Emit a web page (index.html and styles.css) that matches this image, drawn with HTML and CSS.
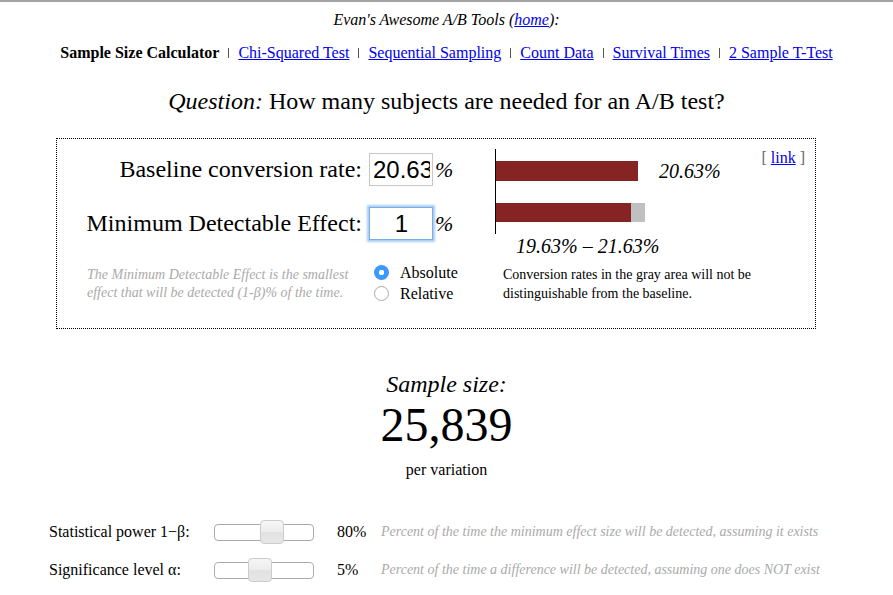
FILE: index.html
```html
<!DOCTYPE html>
<html>
<head>
<meta charset="utf-8">
<title>Sample Size Calculator</title>
<link rel="stylesheet" href="styles.css">
</head>
<body>
<div class="topbar"></div>
<div class="tools">Evan's Awesome A/B Tools (<a href="#">home</a>):</div>
<nav class="nav">
  <b>Sample Size Calculator</b><span class="sep"></span><a href="#">Chi-Squared Test</a><span class="sep"></span><a href="#">Sequential Sampling</a><span class="sep"></span><a href="#">Count Data</a><span class="sep"></span><a href="#">Survival Times</a><span class="sep"></span><a href="#">2 Sample T-Test</a>
</nav>
<h1 class="question"><i>Question:</i> How many subjects are needed for an A/B test?</h1>

<div class="box">
  <div class="left">
    <div class="field">
      <label class="flabel">Baseline conversion rate:</label>
      <input class="num" type="text" value="20.63">
      <span class="pct">%</span>
    </div>
    <div class="field">
      <label class="flabel">Minimum Detectable Effect:</label>
      <input class="num focus" type="text" value="1">
      <span class="pct">%</span>
    </div>
    <div class="noterow">
      <p class="note">The Minimum Detectable Effect is the smallest effect that will be detected (1-β)% of the time.</p>
      <div class="radios">
        <div class="radio"><span class="dot on"></span>Absolute</div>
        <div class="radio"><span class="dot"></span>Relative</div>
      </div>
    </div>
  </div>
  <div class="right">
    <div class="chart">
      <div class="barrow"><div class="bar" style="width:142px"></div><span class="barlabel">20.63%</span></div>
      <div class="barrow second"><div class="bar" style="width:135px"></div><div class="bar gray" style="width:14px"></div></div>
    </div>
    <div class="range">19.63% – 21.63%</div>
    <p class="conv">Conversion rates in the gray area will not be distinguishable from the baseline.</p>
  </div>
  <div class="permalink">[ <a href="#">link</a> ]</div>
</div>

<div class="result">
  <div class="ss-title">Sample size:</div>
  <div class="ss-num">25,839</div>
  <div class="ss-per">per variation</div>
</div>

<div class="params">
  <div class="prow">
    <span class="plabel">Statistical power 1−β:</span>
    <div class="slider"><div class="thumb" style="margin-left:45px"></div></div>
    <span class="pval">80%</span>
    <span class="pdesc">Percent of the time the minimum effect size will be detected, assuming it exists</span>
  </div>
  <div class="prow">
    <span class="plabel">Significance level α:</span>
    <div class="slider"><div class="thumb" style="margin-left:33px"></div></div>
    <span class="pval">5%</span>
    <span class="pdesc">Percent of the time a difference will be detected, assuming one does NOT exist</span>
  </div>
</div>
</body>
</html>
```

FILE: styles.css
```css
html, body {
  margin: 0;
  padding: 0;
  background: #fff;
}
body {
  font-family: "Liberation Serif", "Times New Roman", serif;
  color: #000;
  width: 893px;
}
a { color: #0000ee; }

.topbar {
  height: 2px;
  background: #a3a3a3;
}
.tools {
  margin-top: 9px;
  text-align: center;
  font-style: italic;
  font-size: 16px;
  line-height: 18px;
}
.nav {
  margin-top: 14px;
  text-align: center;
  font-size: 16px;
  line-height: 20px;
}
.nav b { font-weight: bold; }
.sep {
  display: inline-block;
  width: 1px;
  height: 10px;
  background: #555;
  margin: 0 9px;
  vertical-align: 0;
}
.question {
  margin: 25px 0 0;
  text-align: center;
  font-weight: normal;
  font-size: 24px;
  line-height: 26px;
}

.box {
  position: relative;
  margin: 24px 0 0 56px;
  width: 758px;
  height: 189px;
  border: 1px dotted #000;
  display: flex;
}
.left {
  width: 418px;
  padding: 14px 0 0 20px;
}
.field {
  display: flex;
  align-items: center;
  height: 33px;
  margin-bottom: 21px;
}
.flabel {
  flex: none;
  width: 285px;
  text-align: right;
  font-size: 24px;
  white-space: nowrap;
}
.num {
  box-sizing: border-box;
  width: 64px;
  height: 33px;
  margin: 0 0 0 7px;
  padding: 0 2px 0 3px;
  border: 1px solid #c8c8c8;
  font-family: "Liberation Sans", Arial, sans-serif;
  font-size: 24px;
  color: #000;
  outline: none;
}
.num.focus {
  border: 1px solid #78aee8;
  box-shadow: 0 0 2px 2px #a9cdf4;
  text-align: center;
}
.pct {
  margin-left: 2px;
  font-size: 22px;
  font-style: italic;
}
.noterow {
  display: flex;
  padding: 5px 0 0 10px;
}
.note {
  margin: 0;
  width: 268px;
  font-style: italic;
  font-size: 14px;
  line-height: 18px;
  color: #aaa;
}
.radios {
  margin-left: 19px;
  margin-top: -4px;
}
.radio {
  display: flex;
  align-items: center;
  height: 21px;
  font-size: 16px;
}
.dot {
  box-sizing: border-box;
  width: 15px;
  height: 15px;
  border-radius: 50%;
  border: 1px solid #aaa;
  background: #fff;
  margin-right: 11px;
}
.dot.on {
  border: none;
  background: radial-gradient(circle, #fff 0, #fff 2.5px, #3b99fc 3px);
}

.right {
  padding: 10px 0 0 0;
}
.chart {
  border-left: 1px solid #000;
  padding: 12px 0 11px;
  height: 62px;
}
.barrow {
  display: flex;
  align-items: center;
  height: 20px;
}
.barrow.second {
  margin-top: 22px;
  height: 19px;
}
.bar {
  height: 100%;
  background: #862323;
}
.bar.gray { background: #c0c0c0; }
.barlabel {
  margin-left: 21px;
  font-style: italic;
  font-size: 20px;
}
.range {
  margin: 1px 0 0 21px;
  font-style: italic;
  font-size: 20px;
  line-height: 22px;
}
.conv {
  margin: 8px 0 0 8px;
  width: 270px;
  font-size: 14px;
  line-height: 19px;
}
.permalink {
  position: absolute;
  top: 10px;
  right: 10px;
  font-size: 16px;
  color: #666;
}

.result {
  margin-top: 41px;
  text-align: center;
}
.ss-title {
  font-style: italic;
  font-size: 24px;
  line-height: 28px;
}
.ss-num {
  font-size: 48px;
  line-height: 54px;
}
.ss-per {
  margin-top: 9px;
  font-size: 16px;
  line-height: 18px;
}

.params {
  margin: 41px 0 0 49px;
}
.prow {
  display: flex;
  align-items: center;
  height: 24px;
  margin-bottom: 14px;
}
.plabel {
  width: 165px;
  font-size: 16px;
}
.slider {
  box-sizing: border-box;
  width: 100px;
  height: 17px;
  border: 1px solid #aaa;
  border-radius: 4px;
  display: flex;
  align-items: center;
}
.thumb {
  box-sizing: border-box;
  width: 24px;
  height: 24px;
  border: 1px solid #ccc;
  border-radius: 4px;
  background: linear-gradient(#f6f6f6 0, #ececec 50%, #e2e2e2 51%, #e6e6e6 100%);
}
.pval {
  width: 44px;
  margin-left: 23px;
  font-size: 16px;
}
.pdesc {
  font-style: italic;
  font-size: 14px;
  color: #aaa;
}
```
